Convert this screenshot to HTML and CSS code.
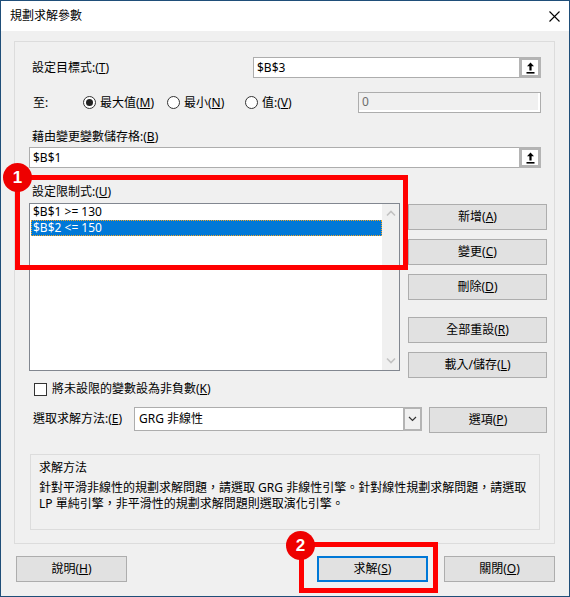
FILE: index.html
```html
<!DOCTYPE html>
<html lang="zh-Hant">
<head>
<meta charset="utf-8">
<title>規劃求解參數</title>
<link rel="stylesheet" href="styles.css">
</head>
<body>
<div class="window">
  <div class="titlebar">
    <span class="title">規劃求解參數</span>
    <svg class="close" width="11" height="11" viewBox="0 0 11 11"><path d="M0.5 0.5L10.5 10.5M10.5 0.5L0.5 10.5" stroke="#000" stroke-width="1.1" fill="none"/></svg>
  </div>
  <div class="content">
    <div class="group">
      <div class="row r-target">
        <span class="lbl">設定目標式:(<u>T</u>)</span>
        <div class="refinput short"><span class="val">$B$3</span><span class="refbtn"><svg width="9" height="12" viewBox="0 0 9 12"><polygon points="4.5,0.5 8,4.2 5.6,4.2 5.6,8.6 3.4,8.6 3.4,4.2 1,4.2" fill="#000"/><rect x="0.5" y="10" width="8" height="1.6" fill="#000"/></svg></span></div>
      </div>
      <div class="r-to">
        <span class="lbl to">至:</span>
        <span class="radio"><span class="dot checked"></span>最大值(<u>M</u>)</span>
        <span class="radio"><span class="dot"></span>最小(<u>N</u>)</span>
        <span class="radio"><span class="dot"></span>值:(<u>V</u>)</span>
        <div class="valbox">0</div>
      </div>
      <div class="row r-label1"><span class="lbl">藉由變更變數儲存格:(<u>B</u>)</span></div>
      <div class="row r-var">
        <div class="refinput long"><span class="val">$B$1</span><span class="refbtn"><svg width="9" height="12" viewBox="0 0 9 12"><polygon points="4.5,0.5 8,4.2 5.6,4.2 5.6,8.6 3.4,8.6 3.4,4.2 1,4.2" fill="#000"/><rect x="0.5" y="10" width="8" height="1.6" fill="#000"/></svg></span></div>
      </div>
      <div class="row r-label2"><span class="lbl">設定限制式:(<u>U</u>)</span></div>
      <div class="r-cons">
        <div class="listbox">
          <div class="items">
            <div class="item">$B$1 &gt;= 130</div>
            <div class="item selected">$B$2 &lt;= 150</div>
          </div>
          <div class="scrollbar">
            <svg width="10" height="7" viewBox="0 0 10 7"><polyline points="1,5.5 5,1.5 9,5.5" stroke="#c2c2c2" stroke-width="1.6" fill="none"/></svg>
            <svg width="10" height="7" viewBox="0 0 10 7"><polyline points="1,1.5 5,5.5 9,1.5" stroke="#c2c2c2" stroke-width="1.6" fill="none"/></svg>
          </div>
        </div>
        <div class="btncol">
          <div class="btn">新增(<u>A</u>)</div>
          <div class="btn">變更(<u>C</u>)</div>
          <div class="btn">刪除(<u>D</u>)</div>
          <div class="btn gap">全部重設(<u>R</u>)</div>
          <div class="btn">載入/儲存(<u>L</u>)</div>
        </div>
      </div>
      <div class="row r-check">
        <span class="checkbox"></span>
        <span class="checktext">將未設限的變數設為非負數(<u>K</u>)</span>
      </div>
      <div class="row r-method">
        <span class="lbl method">選取求解方法:(<u>E</u>)</span>
        <div class="select">
          <span class="selval">GRG 非線性</span>
          <span class="drop"><svg width="9" height="6" viewBox="0 0 9 6"><polyline points="1,1 4.5,4.5 8,1" stroke="#333" stroke-width="1.2" fill="none"/></svg></span>
        </div>
        <div class="btn opt">選項(<u>P</u>)</div>
      </div>
      <div class="infobox">
        <div class="infotitle">求解方法</div>
        <div class="infotext">針對平滑非線性的規劃求解問題，請選取 GRG 非線性引擎。針對線性規劃求解問題，請選取<br>LP 單純引擎，非平滑性的規劃求解問題則選取演化引擎。</div>
      </div>
    </div>
    <div class="footer">
      <div class="btn fbtn">說明(<u>H</u>)</div>
      <div class="btn fbtn default">求解(<u>S</u>)</div>
      <div class="btn fbtn">關閉(<u>O</u>)</div>
    </div>
  </div>
  <div class="mark mark1"></div>
  <div class="mark mark2"></div>
  <div class="badge badge1">1</div>
  <div class="badge badge2">2</div>
</div>
</body>
</html>
```
FILE: styles.css
```css
* { box-sizing: border-box; }
body {
  margin: 0;
  font-family: "Noto Sans", "Noto Sans CJK TC", sans-serif;
  font-size: 12px;
  color: #000;
}
u { text-decoration: underline; text-underline-offset: 1px; }
.window {
  position: relative;
  width: 570px;
  height: 597px;
  border: 1px solid #1f4e79;
  background: #f0f0f0;
}
.titlebar {
  height: 30px;
  background: #fff;
  display: flex;
  align-items: center;
  justify-content: space-between;
  padding: 0 9px 0 9px;
}
.title { line-height: 16px; }
.group {
  margin: 10px 0 0 13px;
  width: 541px;
  border: 1px solid #dcdcdc;
  padding: 0 7px 13px 14px;
}
.row { display: flex; align-items: center; }
.lbl { line-height: 16px; margin-left: 3px; white-space: nowrap; }
.r-target { margin-top: 15px; height: 21px; }
.refinput {
  display: flex;
  height: 21px;
  border: 1px solid #adadad;
  background: #fff;
  margin-right: 6px;
}
.refinput.short { width: 288px; margin-left: auto; }
.refinput.long { width: 512px; }
.refinput .val { flex: 1; padding-left: 3px; line-height: 19px; }
.refbtn {
  width: 22px;
  height: 21px;
  margin: -1px -1px -1px 0;
  border: 3px solid #b4b4b4;
  background: #fff;
  display: flex;
  align-items: center;
  justify-content: center;
}
.r-to {
  margin-top: 14px;
  height: 21px;
  display: grid;
  grid-template-columns: 54px 84px 78px 113px 183px;
  align-items: center;
}
.lbl.to { margin-left: 4px; }
.radio { display: flex; align-items: center; line-height: 16px; white-space: nowrap; }
.dot {
  width: 13px;
  height: 13px;
  border: 1px solid #333;
  border-radius: 50%;
  background: #fff;
  margin-right: 4px;
  display: flex;
  align-items: center;
  justify-content: center;
}
.dot.checked::after {
  content: "";
  width: 7px;
  height: 7px;
  border-radius: 50%;
  background: #222;
}
.valbox {
  height: 21px;
  border: 1px solid #adadad;
  background: #f0f0f0;
  box-shadow: inset -2px -2px 0 #fff;
  color: #6d6d6d;
  padding-left: 3px;
  line-height: 17px;
}
.r-label1 { margin-top: 16px; height: 16px; }
.r-var { margin-top: 2px; }
.r-label2 { margin-top: 16px; height: 16px; }
.r-cons { margin-top: 3px; height: 168px; display: flex; align-items: flex-start; }
.listbox {
  width: 371px;
  height: 168px;
  border: 1px solid #828790;
  background: #fff;
  display: flex;
}
.items { flex: 1; padding-left: 1px; }
.item { height: 16px; line-height: 16px; padding-left: 2px; white-space: nowrap; }
.item.selected {
  background: #0078d7;
  color: #fff;
  outline: 1px dotted #f5a623;
  outline-offset: -1px;
}
.scrollbar {
  width: 17px;
  background: #f0f0f0;
  display: flex;
  flex-direction: column;
  justify-content: space-between;
  align-items: center;
  padding: 6px 0 6px 0;
}
.btncol {
  margin-left: 8px;
  width: 139px;
  padding-top: 1px;
  display: flex;
  flex-direction: column;
  gap: 9px;
}
.btn {
  height: 26px;
  background: #e1e1e1;
  border: 1px solid #adadad;
  display: flex;
  align-items: center;
  justify-content: center;
  line-height: 16px;
  white-space: nowrap;
}
.btn.gap { margin-top: 8px; }
.r-check { margin-top: 10px; height: 16px; }
.checkbox {
  width: 13px;
  height: 13px;
  border: 1px solid #333;
  background: #fff;
  margin-left: 5px;
}
.checktext { margin-left: 5px; line-height: 16px; }
.r-method { margin-top: 10px; height: 26px; align-items: flex-start; }
.lbl.method { width: 105px; margin-left: 0; padding-left: 4px; margin-top: 4px; }
.select {
  width: 288px;
  height: 24px;
  border: 1px solid #adadad;
  background: #fff;
  display: flex;
}
.selval { flex: 1; padding-left: 4px; line-height: 22px; }
.drop {
  width: 19px;
  margin: -1px -1px -1px 0;
  border: 2px solid #b4b4b4;
  background: #f0f0f0;
  display: flex;
  align-items: center;
  justify-content: center;
}
.btn.opt { width: 118px; margin-left: 7px; }
.infobox {
  margin-top: 21px;
  margin-left: 1px;
  width: 510px;
  height: 76px;
  border: 1px solid #dcdcdc;
  padding: 5px 0 0 8px;
}
.infotitle { line-height: 16px; }
.infotext { margin-top: 4px; line-height: 16px; white-space: nowrap; }
.footer {
  display: flex;
  margin-top: 12px;
  padding: 0 14px 0 15px;
}
.fbtn { width: 111px; }
.fbtn.default { margin-left: auto; margin-right: 16px; border: 2px solid #0078d7; }
.mark {
  position: absolute;
  border: 5px solid #ff0000;
}
.mark1 { left: 14px; top: 174px; width: 393px; height: 95px; }
.mark2 { left: 298px; top: 541px; width: 139px; height: 51px; }
.badge {
  position: absolute;
  width: 29px;
  height: 29px;
  border-radius: 50%;
  background: #ee0000;
  color: #fff;
  font-family: "Liberation Sans", sans-serif;
  font-weight: bold;
  font-size: 17px;
  display: flex;
  align-items: center;
  justify-content: center;
}
.badge1 { left: 2px; top: 162px; }
.badge2 { left: 285px; top: 530px; }
```
